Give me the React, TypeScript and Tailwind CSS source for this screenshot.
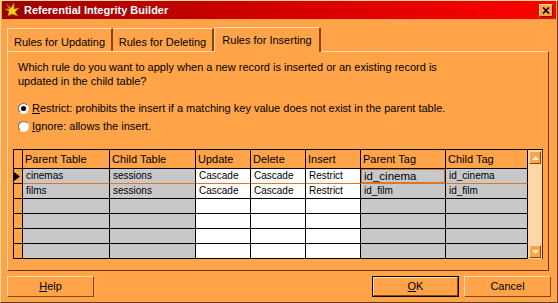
import React from "react";

const rows = [
  ["cinemas", "sessions", "Cascade", "Cascade", "Restrict", "id_cinema", "id_cinema"],
  ["films", "sessions", "Cascade", "Cascade", "Restrict", "id_film", "id_film"],
  ["", "", "", "", "", "", ""],
  ["", "", "", "", "", "", ""],
  ["", "", "", "", "", "", ""],
  ["", "", "", "", "", "", ""],
];

const headers = ["Parent Table", "Child Table", "Update", "Delete", "Insert", "Parent Tag", "Child Tag"];
const whiteCols = [2, 3, 4];

function Radio({ checked }: { checked?: boolean }) {
  return (
    <span className="flex h-[11px] w-[11px] items-center justify-center rounded-full border border-t-[#6b6b6b] border-l-[#6b6b6b] border-r-[#e8e8e8] border-b-[#e8e8e8] bg-white">
      {checked && <span className="h-[5px] w-[5px] rounded-full bg-black" />}
    </span>
  );
}

function Btn({ children, primary }: { children: React.ReactNode; primary?: boolean }) {
  return (
    <div className={primary ? "h-[21px] w-[87px] border border-black" : "h-[21px] w-[87px]"}>
      <div className="flex h-full w-full items-center justify-center border border-t-[#ffdcae] border-l-[#ffdcae] border-r-[#8a4510] border-b-[#8a4510] bg-[#ffa449] text-[11px] text-black">
        {children}
      </div>
    </div>
  );
}

export default function App() {
  return (
    <div
      className="flex h-[303px] w-[558px] flex-col overflow-hidden border border-t-[#ffd9a0] border-l-[#ffd9a0] border-r-[#6e3500] border-b-[#6e3500] bg-[#ffa449] text-black"
      style={{ fontFamily: '"Liberation Sans", Arial, sans-serif' }}
    >
      {/* title bar */}
      <div className="mx-[1px] flex h-[18px] items-center bg-gradient-to-r from-[#9c0000] via-[#d40000] to-[#ff0000] pl-[3px] pr-[3px]">
        <svg width="15" height="14" viewBox="0 0 15 14">
          <polygon points="1,1 6,5 9,0 9,6 14,5 10,9 13,13 7,11 3,13 4,8 0,6 5,6" fill="#f4d020" stroke="#b07800" strokeWidth="0.6" />
        </svg>
        <span className="ml-[4px] text-[11px] font-bold text-white">Referential Integrity Builder</span>
        <div className="ml-auto flex h-[13px] w-[14px] items-center justify-center border border-t-[#ffdcae] border-l-[#ffdcae] border-r-[#5a2a00] border-b-[#5a2a00] bg-[#ffa449]">
          <svg width="8" height="7" viewBox="0 0 8 7">
            <path d="M1 0.5 L7 6.5 M7 0.5 L1 6.5" stroke="black" strokeWidth="1.6" />
          </svg>
        </div>
      </div>

      <div className="flex flex-col px-[6px]">
        {/* tabs */}
        <div className="mt-[8px] flex h-[24px] items-end text-[11px]">
          <div className="flex h-[23px] w-[106px] justify-center border-l border-t border-r-2 border-l-[#ffdcae] border-t-[#ffdcae] border-r-[#8a4510] pt-[6px] leading-[14px]">
            Rules for Updating
          </div>
          <div className="flex h-[23px] w-[101px] justify-center border-t border-r-2 border-t-[#ffdcae] border-r-[#8a4510] pt-[6px] leading-[14px]">
            Rules for Deleting
          </div>
          <div className="relative z-10 -mb-[1px] flex h-[25px] w-[107px] justify-center rounded-tr-[2px] border-l border-t border-r-2 border-l-[#ffdcae] border-t-[#ffdcae] border-r-[#8a4510] bg-[#ffa449] pt-[5px] leading-[14px]">
            Rules for Inserting
          </div>
        </div>

        {/* panel */}
        <div className="flex h-[220px] w-[542px] flex-col border border-t-[#ffdcae] border-l-[#ffdcae] border-r-[#6e3500] border-b-[#6e3500] px-[5px] pt-[8px]">
          <p className="ml-[5px] text-[11px] leading-[14px]">
            Which rule do you want to apply when a new record is inserted or an existing record is
            <br />
            updated in the child table?
          </p>
          <div className="ml-[5px] mt-[13px] flex flex-col gap-[4px] text-[11px] leading-[14px]">
            <div className="flex h-[14px] items-center gap-[3px]">
              <Radio checked />
              <span>
                <span className="underline">R</span>estrict: prohibits the insert if a matching key value does not exist in the parent table.
              </span>
            </div>
            <div className="flex h-[14px] items-center gap-[3px]">
              <Radio />
              <span>
                <span className="underline">I</span>gnore: allows the insert.
              </span>
            </div>
          </div>

          {/* grid */}
          <div className="mt-[16px] flex h-[110px] w-[530px] overflow-hidden border-l border-t border-black">
            <div className="grid h-[109px] grid-cols-[9px_87px_86px_55px_55px_55px_85px_82px] grid-rows-[19px_15px_15px_15px_15px_15px_15px] overflow-hidden">
              <div className="border-b border-r border-black bg-[#ffa449]" />
              {headers.map((h) => (
                <div key={h} className="overflow-hidden whitespace-nowrap border-b border-r border-black bg-[#ffa449] pl-[2px] text-[11px] leading-[18px]">
                  {h}
                </div>
              ))}
              {rows.map((r, i) => (
                <React.Fragment key={i}>
                  <div className={i === 0 ? "flex items-center border-b border-r border-black bg-[#ffa449]" : "border-b border-r border-black bg-[#ffa449]"}>
                    {i === 0 && (
                      <svg width="6" height="9" viewBox="0 0 6 9">
                        <polygon points="0,0 6,4.5 0,9" fill="black" />
                      </svg>
                    )}
                  </div>
                  {r.map((c, j) => {
                    const white = whiteCols.includes(j);
                    const focused = i === 0 && j === 5;
                    const bottom = i === 0 ? "border-b-[#d9782a]" : "border-b-black";
                    return (
                      <div
                        key={j}
                        className={`overflow-hidden whitespace-nowrap border-b border-r border-r-black ${bottom} ${white ? "bg-white" : "bg-[#c8c8c8]"}`}
                      >
                        {focused ? (
                          <div className="h-full border border-[#d9782a] pl-[2px] text-[11.5px] leading-[12px]">{c}</div>
                        ) : (
                          <div className="pl-[3px] text-[10px] leading-[14px]">{c}</div>
                        )}
                      </div>
                    );
                  })}
                </React.Fragment>
              ))}
            </div>
            {/* scrollbar */}
            <div className="flex h-[110px] w-[15px] flex-col justify-between border-r border-r-[#5a2a00] bg-[#ffd6a8] px-[1px] pb-[2px] pt-[1px]">
              <div className="flex h-[13px] items-center justify-center border border-t-[#ffdcae] border-l-[#ffdcae] border-r-[#8a4510] border-b-[#8a4510] bg-[#ffa449]">
                <svg width="7" height="4" viewBox="0 0 7 4">
                  <polygon points="0,4 3.5,0 7,4" fill="#fff0d8" />
                </svg>
              </div>
              <div className="flex h-[13px] items-center justify-center border border-t-[#ffdcae] border-l-[#ffdcae] border-r-[#8a4510] border-b-[#8a4510] bg-[#ffa449]">
                <svg width="7" height="4" viewBox="0 0 7 4">
                  <polygon points="0,0 3.5,4 7,0" fill="#fff0d8" />
                </svg>
              </div>
            </div>
          </div>
        </div>

        {/* buttons */}
        <div className="mt-[5px] flex justify-between">
          <Btn>
            <span className="underline">H</span>elp
          </Btn>
          <div className="flex gap-[5px]">
            <Btn primary>
              <span className="underline">O</span>K
            </Btn>
            <Btn>Cancel</Btn>
          </div>
        </div>
      </div>
    </div>
  );
}
